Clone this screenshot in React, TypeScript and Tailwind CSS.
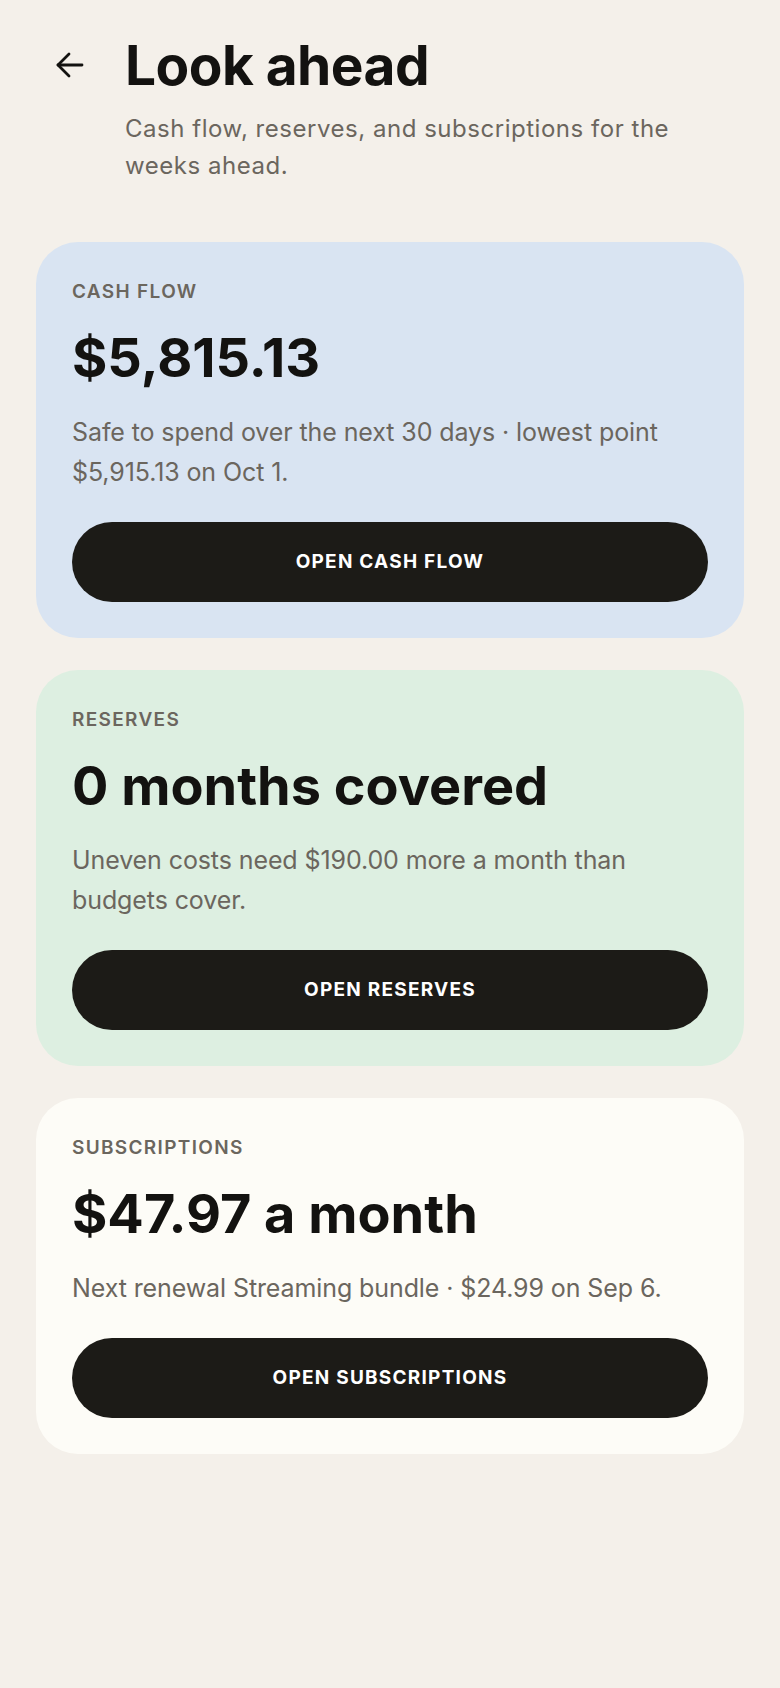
import React from "react";

type CardProps = {
  label: string;
  value: string;
  body: string;
  action: string;
  bg: string;
};

function Card({ label, value, body, action, bg }: CardProps) {
  return (
    <section className={`${bg} rounded-[42px] px-9 pt-9 pb-[36px] flex flex-col`}>
      <div className="text-[19px] leading-[28px] font-semibold tracking-[0.07em] text-[#6b665e]">
        {label}
      </div>
      <div className="mt-[22px] text-[54px] leading-[60px] font-bold tracking-[0em] text-[#131210]">
        {value}
      </div>
      <p className="mt-[24px] text-[25px] leading-[40px] text-[#6b665e] tracking-[-0.004em]">
        {body}
      </p>
      <button className="mt-[30px] h-[80px] w-full rounded-full bg-[#1c1b17] text-white text-[19px] font-bold tracking-[0.065em]">
        {action}
      </button>
    </section>
  );
}

export default function App() {
  return (
    <div
      className="min-h-[1688px] w-full bg-[#f4f0ea] pb-10"
      style={{ fontFamily: "Inter, 'Noto Sans', sans-serif" }}
    >
      <header className="flex items-start pl-[56px] pr-[60px] pt-[35px]">
        <div className="h-[60px] w-[28px] flex items-center shrink-0">
          <svg width="28" height="26" viewBox="0 0 28 26" fill="none" stroke="#131210" strokeWidth="2.8" strokeLinecap="round" strokeLinejoin="round">
            <path d="M26 13H2" />
            <path d="M13 2L2 13l11 11" />
          </svg>
        </div>
        <div className="ml-[41px] flex flex-col">
          <h1 className="text-[55px] leading-[60px] font-bold tracking-[-0.01em] text-[#131210]">
            Look ahead
          </h1>
          <p className="mt-[15px] max-w-[590px] text-[24px] leading-[37px] text-[#6b665e] tracking-[0.022em]">
            Cash flow, reserves, and subscriptions for the weeks ahead.
          </p>
        </div>
      </header>
      <main className="mt-[58px] mx-9 flex flex-col gap-8">
        <Card
          bg="bg-[#d9e4f2]"
          label="CASH FLOW"
          value="$5,815.13"
          body="Safe to spend over the next 30 days · lowest point $5,915.13 on Oct 1."
          action="OPEN CASH FLOW"
        />
        <Card
          bg="bg-[#ddefe1]"
          label="RESERVES"
          value="0 months covered"
          body="Uneven costs need $190.00 more a month than budgets cover."
          action="OPEN RESERVES"
        />
        <Card
          bg="bg-[#fdfcf7]"
          label="SUBSCRIPTIONS"
          value="$47.97 a month"
          body="Next renewal Streaming bundle · $24.99 on Sep 6."
          action="OPEN SUBSCRIPTIONS"
        />
      </main>
    </div>
  );
}
